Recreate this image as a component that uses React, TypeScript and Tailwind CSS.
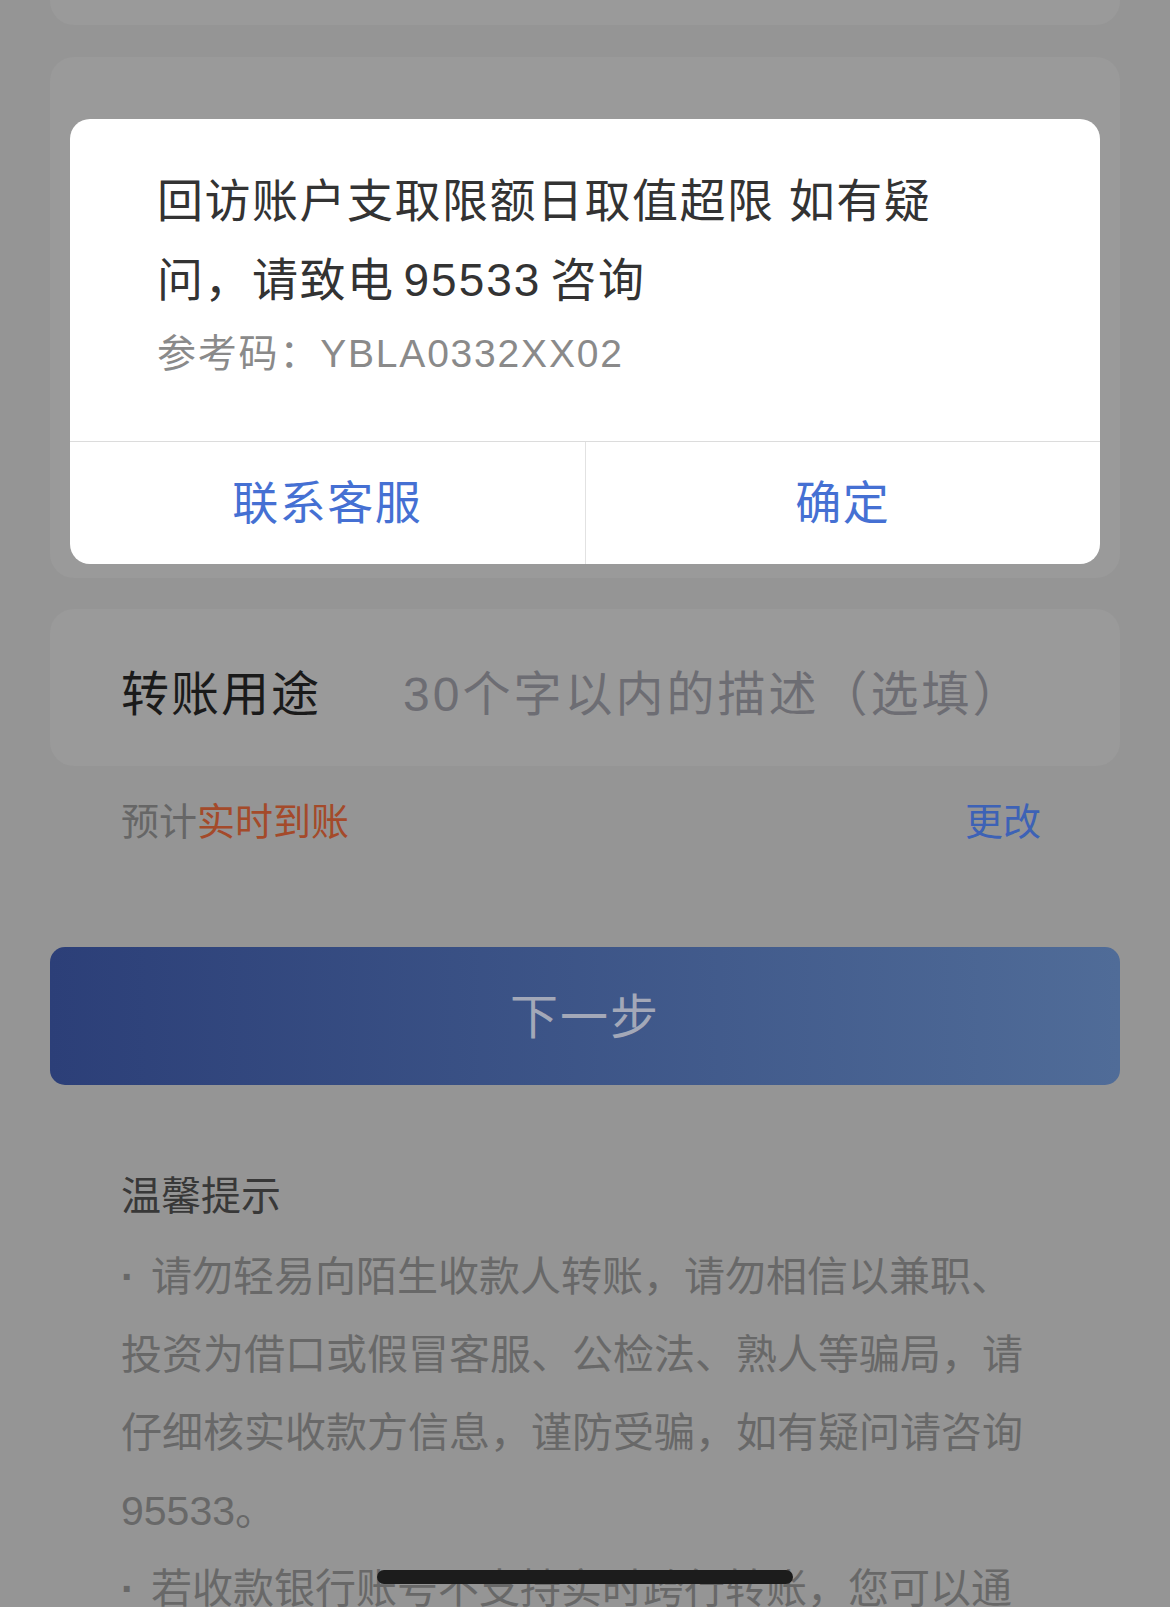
import React from 'react';

const tips = [
  '请勿轻易向陌生收款人转账，请勿相信以兼职、投资为借口或假冒客服、公检法、熟人等骗局，请仔细核实收款方信息，谨防受骗，如有疑问请咨询95533。',
  '若收款银行账号不支持实时跨行转账，您可以通过普通转账方式进行汇款，具体到账时间以收款银行为准。',
];

const App: React.FC = () => {
  return (
    <div className="relative w-full h-[1607px] overflow-hidden bg-[#959595] px-[50px] font-['Liberation_Sans','Noto_Sans_CJK_SC',sans-serif]">
      {/* cards behind the mask */}
      <div className="h-[25px] rounded-b-[24px] bg-[#9a9a9a]"></div>
      <div className="mt-[32px] h-[521px] rounded-[24px] bg-[#9a9a9a]"></div>

      <div className="mt-[31px] h-[157px] rounded-[24px] bg-[#9a9a9a] flex items-center pt-[14px] px-[71px]">
        <span className="w-[282px] shrink-0 text-[48px] tracking-[2px] text-[#1a1a1a]">转账用途</span>
        <span className="text-[48px] tracking-[3px] text-[#6d6d73]">30个字以内的描述（选填）</span>
      </div>

      <div className="mt-[28px] flex items-center justify-between pl-[71px] pr-[79px] leading-[56px] text-[38px]">
        <div>
          <span className="text-[#666666]">预计</span>
          <span className="text-[#a44a2a]">实时到账</span>
        </div>
        <span className="text-[#3d62b6]">更改</span>
      </div>

      <div className="mt-[97px] h-[138px] rounded-[15px] bg-gradient-to-r from-[#2c3f78] to-[#506c98] flex items-center justify-center pt-[4px]">
        <span className="text-[48px] tracking-[2px] text-[#a3a8b8]">下一步</span>
      </div>

      <div className="mt-[72px] px-[71px]">
        <div className="text-[40px] leading-[78px] text-[#383838]">温馨提示</div>
        <div className="mt-[3px] text-[41px] leading-[78px] text-[#686868]">
          {tips.map((t, i) => (
            <p key={i}>
              <span className="inline-block w-[30px] font-bold">·</span>
              {t}
            </p>
          ))}
        </div>
      </div>

      {/* dialog */}
      <div className="absolute top-[119px] left-[70px] w-[1030px] overflow-hidden rounded-[20px] bg-white">
        <div className="pt-[43px] pb-[55px] pl-[87px] pr-[80px]">
          <p className="text-[46px] leading-[79px] tracking-[1.5px] text-[#333333]">
            回访账户支取限额日取值超限 如有疑
            <br />
            问，请致电<span className="mx-[9px] tracking-[2px]">95533</span>咨询
          </p>
          <p className="mt-[2px] text-[39px] leading-[64px] tracking-[1.8px] text-[#8a8a8a]">参考码：YBLA0332XX02</p>
        </div>
        <div className="flex h-[123px] border-t border-[#dcdcdc]">
          <button className="flex-1 flex items-center justify-center pt-[1px] text-[46px] tracking-[1.5px] text-[#4570d3]">
            联系客服
          </button>
          <button className="flex-1 flex items-center justify-center pt-[1px] border-l border-[#e2e2e2] text-[46px] tracking-[1.5px] text-[#4570d3]">
            确定
          </button>
        </div>
      </div>

      {/* home indicator */}
      <div className="absolute left-[377px] top-[1570px] h-[14px] w-[416px] rounded-full bg-[#1c1c1c]"></div>
    </div>
  );
};

export default App;
